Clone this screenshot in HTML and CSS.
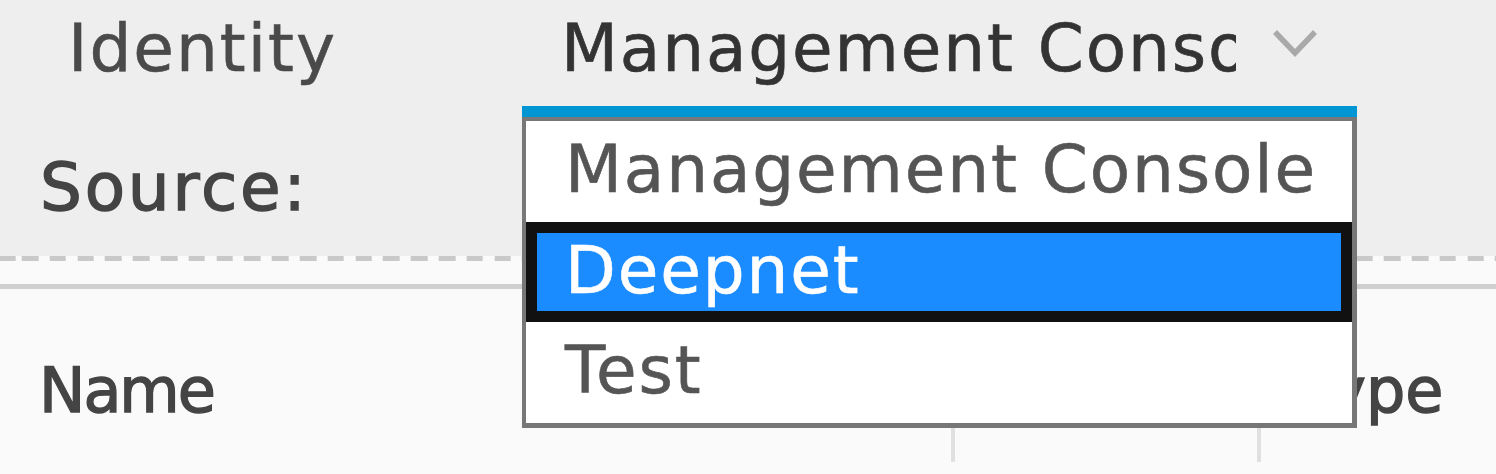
FILE: index.html
```html
<!DOCTYPE html>
<html lang="en">
<head>
<meta charset="utf-8">
<title>Identity Source</title>
<link rel="stylesheet" href="styles.css">
</head>
<body>
<div class="top">
  <div class="row-identity">
    <div class="label label-identity">Identity</div>
    <div class="select-wrap">
      <div class="select">
        <div class="select-value">Management Console</div>
        <svg class="chevron" width="50" height="35" viewBox="0 0 50 35" aria-hidden="true">
          <polyline points="5,6 25,27 45,6" fill="none" stroke="#a9a9a9" stroke-width="5.5"/>
        </svg>
      </div>
      <div class="menu" role="listbox">
        <div class="opt">Management Console</div>
        <div class="opt opt-selected">Deepnet</div>
        <div class="opt">Test</div>
      </div>
    </div>
  </div>
  <div class="row-source">
    <div class="label label-strong label-source">Source:</div>
  </div>
</div>
<div class="dash"></div>
<div class="gap"></div>
<div class="rule"></div>
<div class="thead">
  <div class="th th-name">Name</div>
  <div class="col-div"></div>
  <div class="th th-mid"></div>
  <div class="col-div"></div>
  <div class="th th-type">Type</div>
</div>
</body>
</html>
```

FILE: styles.css
```css
html, body {
  margin: 0;
  padding: 0;
}
body {
  width: 1496px;
  height: 474px;
  overflow: hidden;
  background: #fafafa;
  font-family: "DejaVu Sans", "Liberation Sans", sans-serif;
  font-size: 66px;
  letter-spacing: 1.9px;
}
.top {
  background: #eeeeee;
  height: 256px;
}
.row-identity {
  display: flex;
  height: 117px;
}
.label {
  line-height: 98px;
  white-space: nowrap;
}
.label-identity {
  width: 454px;
  padding-left: 68px;
  letter-spacing: 2px;
  color: #4a4a4a;
  -webkit-text-stroke: 0.6px #4a4a4a;
}
.label-strong {
  color: #444444;
  -webkit-text-stroke: 1.4px #444444;
}
.row-source {
  margin-top: 22px;
}
.label-source {
  padding-left: 40px;
  letter-spacing: 2.8px;
}
.select-wrap {
  position: relative;
  width: 835px;
}
.select {
  box-sizing: border-box;
  height: 117px;
  border-bottom: 11px solid #0095d3;
  display: flex;
  align-items: flex-start;
}
.select-value {
  box-sizing: border-box;
  width: 714px;
  padding-left: 39px;
  line-height: 98px;
  color: #333333;
  -webkit-text-stroke: 0.6px #333333;
  white-space: nowrap;
  overflow: hidden;
  text-overflow: clip;
}
.chevron {
  margin-left: 34px;
  margin-top: 26px;
}
.menu {
  position: absolute;
  top: 117px;
  left: 0;
  width: 835px;
  height: 311px;
  box-sizing: border-box;
  border-style: solid;
  border-color: #777777;
  border-width: 4px 5px 5px 4px;
  background: #ffffff;
  display: grid;
  grid-template-rows: repeat(3, 1fr);
  z-index: 5;
}
.opt {
  padding-left: 39px;
  line-height: 98px;
  color: #555555;
  -webkit-text-stroke: 0.6px #555555;
  white-space: nowrap;
}
.opt-selected {
  background: #1a8cff;
  color: #ffffff;
  -webkit-text-stroke: 0.6px #ffffff;
  box-shadow: inset 0 0 0 11px #111111;
}
.dash {
  height: 5px;
  background-color: #fafafa;
  background-image: repeating-linear-gradient(90deg, #c9c9c9 0 16.5px, transparent 16.5px 27.8px);
  background-position: 21.7px 0;
}
.gap {
  height: 23px;
}
.rule {
  height: 5px;
  background: #cfcfcf;
}
.thead {
  display: flex;
  height: 185px;
}
.th {
  box-sizing: border-box;
  padding-top: 53px;
  font-size: 62px;
  line-height: 98px;
  letter-spacing: 0;
  color: #444444;
  -webkit-text-stroke: 1.4px #444444;
  white-space: nowrap;
}
.th-name {
  width: 951px;
  padding-left: 39px;
  letter-spacing: -2px;
}
.th-mid {
  width: 302px;
}
.th-type {
  padding-left: 40px;
}
.col-div {
  width: 4px;
  height: 34px;
  margin-top: 139px;
  background: #e0e0e0;
}
```
